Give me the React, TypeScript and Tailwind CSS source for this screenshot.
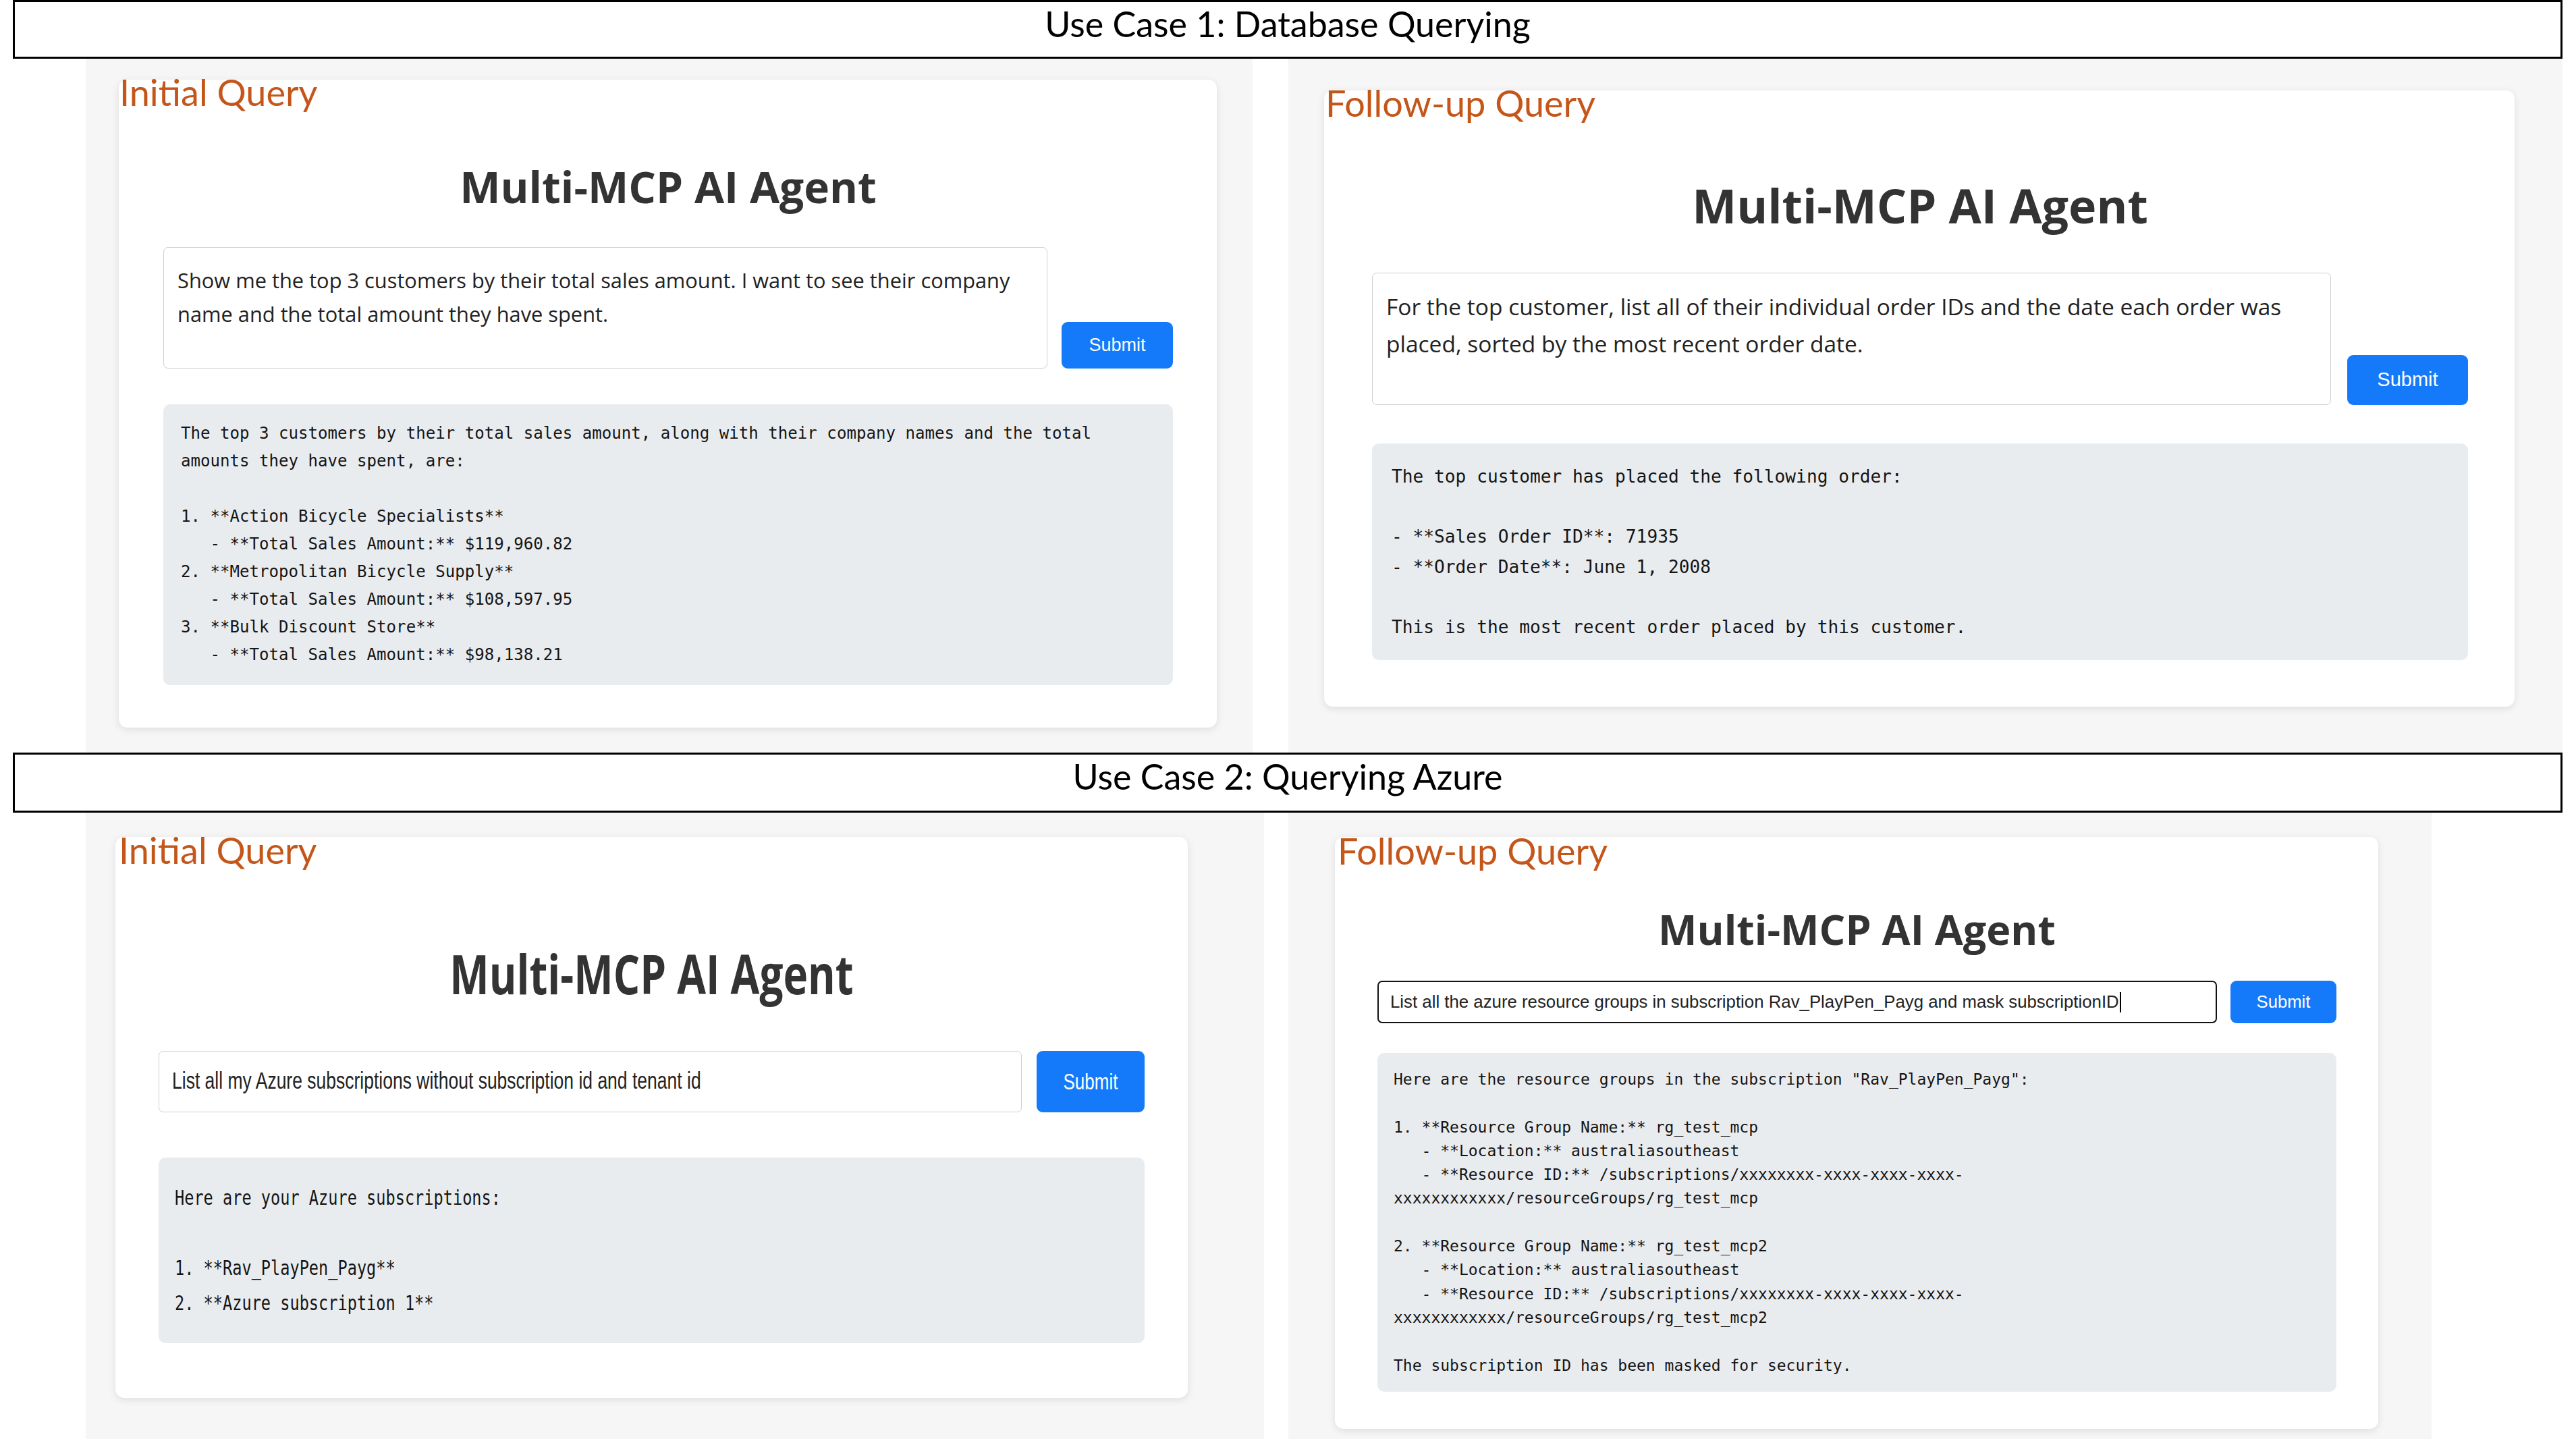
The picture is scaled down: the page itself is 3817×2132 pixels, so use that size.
import React from 'react';

// 每一行等宽输出，空行用不换行空格占位
type LinesProps = {
  lines: string[];
  className: string;
  spanClassName?: string;
};

const Lines: React.FC<LinesProps> = ({ lines, className, spanClassName }) => (
  <>
    {lines.map((line, i) => (
      <div key={i} className={className}>
        <span className={spanClassName}>{line === '' ? '\u00a0' : line}</span>
      </div>
    ))}
  </>
);

const SectionHeader: React.FC<{ title: string; className: string }> = ({ title, className }) => (
  <div
    className={`ml-[19px] w-[3778px] shrink-0 border-[3px] border-black bg-white flex justify-center pt-[6px] ${className}`}
  >
    <span className="font-['Lato',sans-serif] text-[52px] leading-none text-black">{title}</span>
  </div>
);

const Label: React.FC<{ text: string; className: string }> = ({ text, className }) => (
  <span
    className={`absolute font-['Lato',sans-serif] text-[54px] leading-none text-[#c4561a] whitespace-nowrap ${className}`}
  >
    {text}
  </span>
);

const Submit: React.FC<{ className: string; textClassName?: string }> = ({ className, textClassName }) => (
  <button
    className={`shrink-0 rounded-[9px] bg-[#157afa] text-white font-['Liberation_Sans',Arial,sans-serif] flex items-center justify-center ${className}`}
  >
    <span className={textClassName}>Submit</span>
  </button>
);

const card1Output = [
  'The top 3 customers by their total sales amount, along with their company names and the total',
  'amounts they have spent, are:',
  '',
  '1. **Action Bicycle Specialists**',
  '   - **Total Sales Amount:** $119,960.82',
  '2. **Metropolitan Bicycle Supply**',
  '   - **Total Sales Amount:** $108,597.95',
  '3. **Bulk Discount Store**',
  '   - **Total Sales Amount:** $98,138.21',
];

const card2Output = [
  'The top customer has placed the following order:',
  '',
  '- **Sales Order ID**: 71935',
  '- **Order Date**: June 1, 2008',
  '',
  'This is the most recent order placed by this customer.',
];

const card3Output = [
  'Here are your Azure subscriptions:',
  '',
  '1. **Rav_PlayPen_Payg**',
  '2. **Azure subscription 1**',
];

const card4Output = [
  'Here are the resource groups in the subscription "Rav_PlayPen_Payg":',
  '',
  '1. **Resource Group Name:** rg_test_mcp',
  '   - **Location:** australiasoutheast',
  '   - **Resource ID:** /subscriptions/xxxxxxxx-xxxx-xxxx-xxxx-',
  'xxxxxxxxxxxx/resourceGroups/rg_test_mcp',
  '',
  '2. **Resource Group Name:** rg_test_mcp2',
  '   - **Location:** australiasoutheast',
  '   - **Resource ID:** /subscriptions/xxxxxxxx-xxxx-xxxx-xxxx-',
  'xxxxxxxxxxxx/resourceGroups/rg_test_mcp2',
  '',
  'The subscription ID has been masked for security.',
];

const cardBase = 'relative shrink-0 rounded-[13px] bg-white shadow-[0_3px_12px_rgba(0,0,0,0.10)] flex flex-col';
const titleBase = "text-center font-['Open_Sans',sans-serif] font-bold text-[#333]";
const fieldBase = 'shrink-0 rounded-[7px] text-[#222]';
const outputBase = "rounded-[10px] bg-[#e9ecef] font-['DejaVu_Sans_Mono',monospace] text-[#151515]";

export default function App() {
  return (
    <div className="w-[3817px] h-[2132px] bg-white overflow-hidden flex flex-col">
      <SectionHeader title="Use Case 1: Database Querying" className="h-[87px]" />

      <div className="flex h-[1028px] shrink-0">
        {/* 用例1 初始查询 */}
        <div className="ml-[127px] w-[1729px] bg-[#f6f6f6] pl-[49px] pt-[31px]">
          <div className={`${cardBase} w-[1627px] h-[960px] pt-[127px] pl-[66px] pr-[65px]`}>
            <Label text="Initial Query" className="left-[1px] top-[-8px]" />
            <h1 className={`${titleBase} text-[64px] leading-[64px]`}>Multi-MCP AI Agent</h1>
            <div className="mt-[57px] flex items-end gap-[21px]">
              <div className={`${fieldBase} w-[1310px] h-[180px] border border-[#cfcfcf] pt-[23px] pl-[20px] font-['Open_Sans',sans-serif] text-[30.8px] leading-[50px]`}>
                Show me the top 3 customers by their total sales amount. I want to see their company
                <br />
                name and the total amount they have spent.
              </div>
              <Submit className="w-[165px] h-[69px] text-[27px]" />
            </div>
            <div className={`${outputBase} mt-[53px] h-[416px] pt-[23px] pl-[26px] text-[24.1px]`}>
              <Lines lines={card1Output} className="whitespace-pre leading-[41px]" />
            </div>
          </div>
        </div>

        {/* 用例1 追问 */}
        <div className="ml-[53px] w-[1888px] bg-[#f6f6f6] pl-[53px] pt-[47px]">
          <div className={`${cardBase} w-[1764px] h-[913px] pt-[135px] pl-[71px] pr-[69px]`}>
            <Label text="Follow-up Query" className="left-[2px] top-[-8px]" />
            <h1 className={`${titleBase} text-[70px] leading-[70px]`}>Multi-MCP AI Agent</h1>
            <div className="mt-[65px] flex items-end gap-[24px]">
              <div className={`${fieldBase} w-[1421px] h-[196px] border border-[#cfcfcf] pt-[22px] pl-[20px] font-['Open_Sans',sans-serif] text-[33.5px] leading-[55px]`}>
                For the top customer, list all of their individual order IDs and the date each order was
                <br />
                placed, sorted by the most recent order date.
              </div>
              <Submit className="w-[179px] h-[74px] text-[29px]" />
            </div>
            <div className={`${outputBase} mt-[57px] h-[321px] pt-[27px] pl-[29px] text-[26.2px]`}>
              <Lines lines={card2Output} className="whitespace-pre leading-[44.5px]" />
            </div>
          </div>
        </div>
      </div>

      <SectionHeader title="Use Case 2: Querying Azure" className="h-[89px]" />

      <div className="flex flex-1">
        {/* 用例2 初始查询（原截图纵向拉伸） */}
        <div className="ml-[127px] w-[1746px] bg-[#f6f6f6] pl-[44px] pt-[36px]">
          <div className={`${cardBase} w-[1589px] h-[831px] pt-[171px] pl-[64px] pr-[64px]`}>
            <Label text="Initial Query" className="left-[5px] top-[-7px]" />
            <h1 className={`${titleBase} text-[62px] leading-[62px]`}>
              <span className="inline-block scale-y-[1.3]">Multi-MCP AI Agent</span>
            </h1>
            <div className="mt-[84px] flex items-end gap-[22px]">
              <div className={`${fieldBase} w-[1279px] h-[91px] border border-[#cfcfcf] pl-[19px] font-['Liberation_Sans',Arial,sans-serif] text-[26.5px] flex items-center`}>
                <span className="inline-block scale-y-[1.3]">
                  List all my Azure subscriptions without subscription id and tenant id
                </span>
              </div>
              <Submit className="w-[160px] h-[91px] text-[26px]" textClassName="inline-block scale-y-[1.3]" />
            </div>
            <div className={`${outputBase} mt-[67px] h-[275px] pt-[34px] pl-[24px] text-[23.6px]`}>
              <Lines
                lines={card3Output}
                className="whitespace-pre leading-[52px]"
                spanClassName="inline-block scale-y-[1.3]"
              />
            </div>
          </div>
        </div>

        {/* 用例2 追问 */}
        <div className="ml-[36px] w-[1694px] bg-[#f6f6f6] pl-[69px] pt-[36px]">
          <div className={`${cardBase} w-[1546px] h-[877px] pt-[106px] pl-[63px] pr-[62px]`}>
            <Label text="Follow-up Query" className="left-[4px] top-[-6px]" />
            <h1 className={`${titleBase} text-[61px] leading-[61px]`}>Multi-MCP AI Agent</h1>
            <div className="mt-[46px] flex items-end gap-[20px]">
              <div className={`${fieldBase} w-[1244px] h-[63px] border-2 border-[#111] pl-[17px] font-['Liberation_Sans',Arial,sans-serif] text-[25.8px] flex items-center`}>
                List all the azure resource groups in subscription Rav_PlayPen_Payg and mask subscriptionID
                <span className="ml-[1px] inline-block w-[2px] h-[30px] bg-black" />
              </div>
              <Submit className="w-[157px] h-[63px] text-[25.7px]" />
            </div>
            <div className={`${outputBase} mt-[44px] h-[502px] pt-[22px] pl-[24px] text-[23px]`}>
              <Lines lines={card4Output} className="whitespace-pre leading-[35.3px]" />
            </div>
          </div>
        </div>
      </div>
    </div>
  );
}
